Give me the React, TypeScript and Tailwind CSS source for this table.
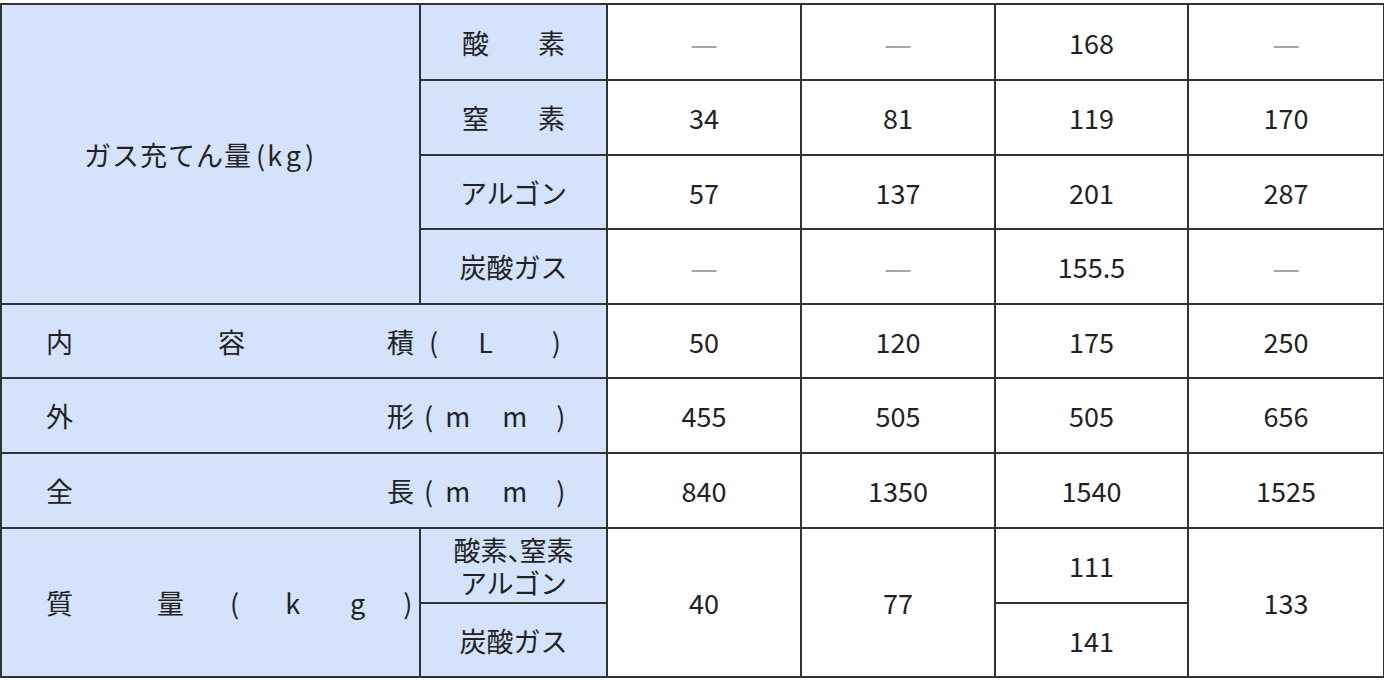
const cell = "border-2 border-[#333] p-0 text-center align-middle";
const head = "bg-[#d4e3fb]";

function Dash() {
  return <span className="text-[31px] text-[#a6a6a6]">—</span>;
}

function Pair({ a, b }: { a: string; b: string }) {
  return (
    <div className="flex justify-center">
      <span>{a}</span>
      <span className="ml-[49px]">{b}</span>
    </div>
  );
}

function MmLabel({ first, last }: { first: string; last: string }) {
  return (
    <div className="flex items-center">
      <span className="ml-[44px]">{first}</span>
      <span className="ml-[314px]">{last}</span>
      <span className="ml-[10px]">(</span>
      <span className="ml-[12px]">m</span>
      <span className="ml-[32px]">m</span>
      <span className="ml-[29px]">)</span>
    </div>
  );
}

const rows = [
  ["—", "—", "168", "—"],
  ["34", "81", "119", "170"],
  ["57", "137", "201", "287"],
  ["—", "—", "155.5", "—"],
];

const gasLabels = [
  <Pair a="酸" b="素" />,
  <Pair a="窒" b="素" />,
  <span>アルゴン</span>,
  <span>炭酸ガス</span>,
];

const heights = ["h-[76px]", "h-[75px]", "h-[74px]", "h-[75px]"];

function Val({ v }: { v: string }) {
  return v === "—" ? <Dash /> : <span>{v}</span>;
}

export default function App() {
  return (
    <div className="w-[1384px] h-[680px] bg-white pt-[3px] font-['Noto_Sans_CJK_JP',sans-serif] text-[27px] leading-none text-[#222]">
      <table className="table-fixed border-collapse w-[1383px]">
        <colgroup>
          <col className="w-[419px]" />
          <col className="w-[187px]" />
          <col className="w-[194px]" />
          <col className="w-[194px]" />
          <col className="w-[193px]" />
          <col className="w-[196px]" />
        </colgroup>
        <tbody>
          {rows.map((r, i) => (
            <tr key={i} className={heights[i]}>
              {i === 0 && (
                <td rowSpan={4} className={`${cell} ${head}`}>
                  <div className="flex items-center pl-[82px]">
                    <span className="tracking-[1px]">ガス充てん量</span>
                    <span className="ml-[4px]">(</span>
                    <span className="ml-[2px] tracking-[4px]">kg</span>
                    <span>)</span>
                  </div>
                </td>
              )}
              <td className={`${cell} ${head}`}>{gasLabels[i]}</td>
              {r.map((v, j) => (
                <td key={j} className={cell}>
                  <Val v={v} />
                </td>
              ))}
            </tr>
          ))}

          <tr className="h-[74px]">
            <td colSpan={2} className={`${cell} ${head}`}>
              <div className="flex items-center">
                <span className="ml-[44px]">内</span>
                <span className="ml-[145px]">容</span>
                <span className="ml-[142px]">積</span>
                <span className="ml-[15px]">(</span>
                <span className="ml-[40px]">L</span>
                <span className="ml-[59px]">)</span>
              </div>
            </td>
            <td className={cell}>50</td>
            <td className={cell}>120</td>
            <td className={cell}>175</td>
            <td className={cell}>250</td>
          </tr>

          <tr className="h-[75px]">
            <td colSpan={2} className={`${cell} ${head}`}>
              <MmLabel first="外" last="形" />
            </td>
            <td className={cell}>455</td>
            <td className={cell}>505</td>
            <td className={cell}>505</td>
            <td className={cell}>656</td>
          </tr>

          <tr className="h-[75px]">
            <td colSpan={2} className={`${cell} ${head}`}>
              <MmLabel first="全" last="長" />
            </td>
            <td className={cell}>840</td>
            <td className={cell}>1350</td>
            <td className={cell}>1540</td>
            <td className={cell}>1525</td>
          </tr>

          <tr className="h-[75px]">
            <td rowSpan={2} className={`${cell} ${head}`}>
              <div className="flex items-center">
                <span className="ml-[44px]">質</span>
                <span className="ml-[84px]">量</span>
                <span className="ml-[46px]">(</span>
                <span className="ml-[46px]">k</span>
                <span className="ml-[50px]">g</span>
                <span className="ml-[38px]">)</span>
              </div>
            </td>
            <td className={`${cell} ${head} leading-[33px]`}>
              酸素<span className="tracking-[-15px]">、</span>窒素
              <br />
              アルゴン
            </td>
            <td rowSpan={2} className={cell}>40</td>
            <td rowSpan={2} className={cell}>77</td>
            <td className={cell}>111</td>
            <td rowSpan={2} className={cell}>133</td>
          </tr>

          <tr className="h-[74px]">
            <td className={`${cell} ${head}`}>炭酸ガス</td>
            <td className={cell}>141</td>
          </tr>
        </tbody>
      </table>
    </div>
  );
}
